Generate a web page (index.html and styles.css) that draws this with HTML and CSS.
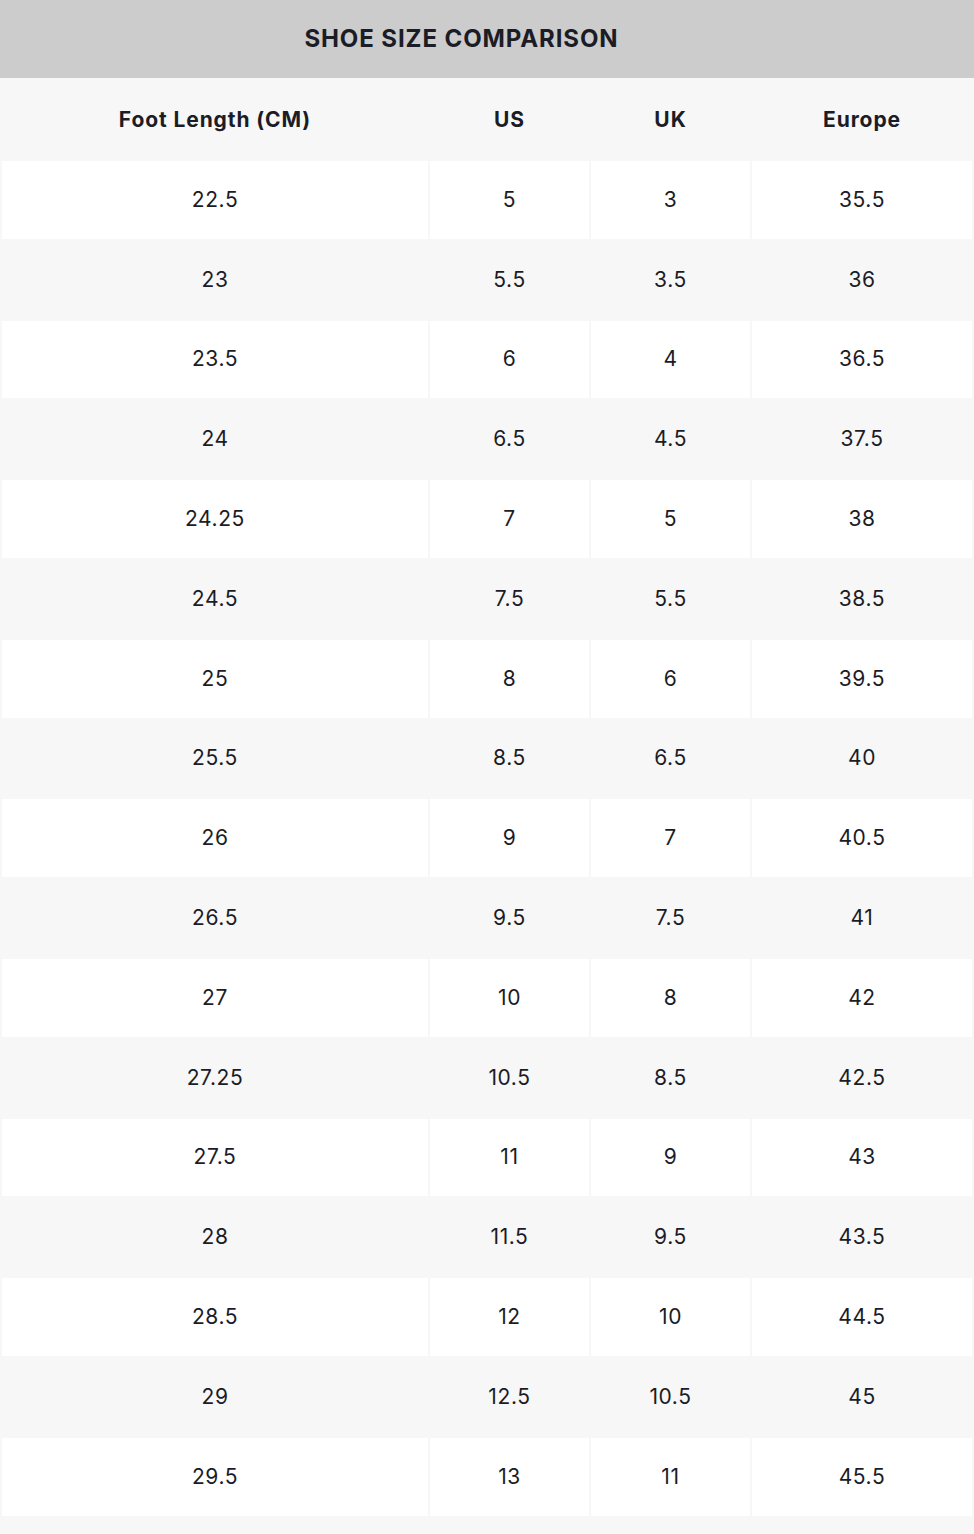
FILE: index.html
```html
<!DOCTYPE html>
<html lang="en">
<head>
<meta charset="utf-8">
<title>Shoe Size Comparison</title>
<link rel="stylesheet" href="styles.css">
</head>
<body>
<div class="title-bar"><h1 class="title">SHOE SIZE COMPARISON</h1></div>
<table class="size-table">
  <thead>
    <tr><th class="c1">Foot Length (CM)</th><th class="c2">US</th><th class="c3">UK</th><th class="c4">Europe</th></tr>
  </thead>
  <tbody>
    <tr><td>22.5</td><td>5</td><td>3</td><td>35.5</td></tr>
    <tr><td>23</td><td>5.5</td><td>3.5</td><td>36</td></tr>
    <tr><td>23.5</td><td>6</td><td>4</td><td>36.5</td></tr>
    <tr><td>24</td><td>6.5</td><td>4.5</td><td>37.5</td></tr>
    <tr><td>24.25</td><td>7</td><td>5</td><td>38</td></tr>
    <tr><td>24.5</td><td>7.5</td><td>5.5</td><td>38.5</td></tr>
    <tr><td>25</td><td>8</td><td>6</td><td>39.5</td></tr>
    <tr><td>25.5</td><td>8.5</td><td>6.5</td><td>40</td></tr>
    <tr><td>26</td><td>9</td><td>7</td><td>40.5</td></tr>
    <tr><td>26.5</td><td>9.5</td><td>7.5</td><td>41</td></tr>
    <tr><td>27</td><td>10</td><td>8</td><td>42</td></tr>
    <tr><td>27.25</td><td>10.5</td><td>8.5</td><td>42.5</td></tr>
    <tr><td>27.5</td><td>11</td><td>9</td><td>43</td></tr>
    <tr><td>28</td><td>11.5</td><td>9.5</td><td>43.5</td></tr>
    <tr><td>28.5</td><td>12</td><td>10</td><td>44.5</td></tr>
    <tr><td>29</td><td>12.5</td><td>10.5</td><td>45</td></tr>
    <tr><td>29.5</td><td>13</td><td>11</td><td>45.5</td></tr>
  </tbody>
</table>
</body>
</html>
```

FILE: styles.css
```css
html, body {
  margin: 0;
  padding: 0;
  background: #f7f7f7;
  color: #1b1c26;
  font-family: Inter, "Noto Sans", sans-serif;
}

.title-bar {
  height: 78px;
  background: #cccccc;
  display: flex;
  align-items: center;
  justify-content: center;
  padding-right: 51px;
  padding-bottom: 2px;
  box-sizing: border-box;
}

.title {
  margin: 0;
  font-size: 24px;
  font-weight: 700;
  letter-spacing: 0.9px;
}

.size-table {
  width: 974px;
  border-collapse: separate;
  border-spacing: 2px;
  table-layout: fixed;
}

.size-table th,
.size-table td {
  text-align: center;
  vertical-align: middle;
  padding: 0;
}

.size-table th {
  height: 78px;
  padding-bottom: 1px;
  font-size: 21px;
  font-weight: 700;
  letter-spacing: 0.9px;
}

.size-table td {
  height: 76.8px;
  padding-bottom: 1px;
  font-size: 21px;
  font-weight: 400;
  letter-spacing: 0.6px;
}

.c1 { width: 426px; }
.c2 { width: 159px; }
.c3 { width: 159px; }
.c4 { width: 220px; }

.size-table tbody tr:nth-child(odd) td {
  background: #ffffff;
}

.size-table tbody tr:nth-child(even) td {
  background: #f7f7f7;
}
```
